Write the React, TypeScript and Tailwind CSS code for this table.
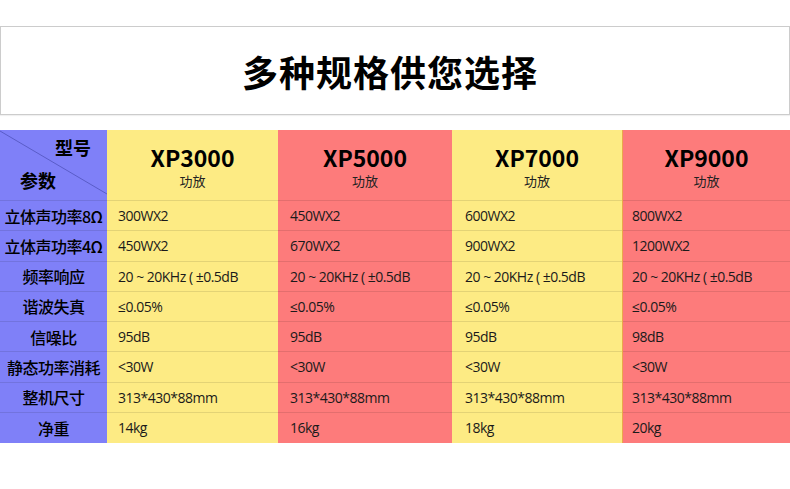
import React from "react";

type Model = {
  name: string;
  bg: string;
  pad: string;
  values: string[];
};

const labels = [
  "立体声功率8Ω",
  "立体声功率4Ω",
  "频率响应",
  "谐波失真",
  "信噪比",
  "静态功率消耗",
  "整机尺寸",
  "净重",
];

const freq = "20 ~ 20KHz ( ±0.5dB";

const models: Model[] = [
  {
    name: "XP3000",
    bg: "bg-[#fdeb84]",
    pad: "pl-[11px]",
    values: ["300WX2", "450WX2", freq, "≤0.05%", "95dB", "<30W", "313*430*88mm", "14kg"],
  },
  {
    name: "XP5000",
    bg: "bg-[#fd7b7b]",
    pad: "pl-[12px]",
    values: ["450WX2", "670WX2", freq, "≤0.05%", "95dB", "<30W", "313*430*88mm", "16kg"],
  },
  {
    name: "XP7000",
    bg: "bg-[#fdeb84]",
    pad: "pl-[13px]",
    values: ["600WX2", "900WX2", freq, "≤0.05%", "95dB", "<30W", "313*430*88mm", "18kg"],
  },
  {
    name: "XP9000",
    bg: "bg-[#fd7b7b]",
    pad: "pl-[9px]",
    values: ["800WX2", "1200WX2", freq, "≤0.05%", "98dB", "<30W", "313*430*88mm", "20kg"],
  },
];

const cjk = { fontFamily: '"Noto Sans CJK SC", "Noto Sans", sans-serif' };
const latin = { fontFamily: '"Open Sans", "Noto Sans CJK SC", sans-serif' };

function ModelColumn({ model, last }: { model: Model; last?: boolean }) {
  return (
    <div className={`flex flex-col ${model.bg} ${last ? "border-l border-[#e9a94a]" : ""}`}>
      <div className="flex h-[71px] flex-col items-center justify-center gap-[7px] border-b border-black/10 pt-[3px]">
        <span className="text-[23px] font-bold leading-[20px] text-black">{model.name}</span>
        <span className="text-[13px] leading-[13px] text-[#222]">功放</span>
      </div>
      {model.values.map((v, i) => (
        <div
          key={i}
          style={latin}
          className={`flex h-[30.25px] items-center whitespace-nowrap ${model.pad} text-[14px] tracking-[-0.5px] text-[#1a1a1a] ${
            i < model.values.length - 1 ? "border-b border-black/10" : ""
          }`}
        >
          {v}
        </div>
      ))}
    </div>
  );
}

export default function App() {
  return (
    <div className="h-[489px] w-[790px] overflow-hidden bg-white pt-[26px]" style={cjk}>
      <div className="flex h-[89px] items-center justify-center border border-[#cccccc] pr-[10px] shadow-[0_1px_1px_rgba(0,0,0,0.06)]">
        <h1 className="text-[36px] font-bold tracking-[1px] text-black">多种规格供您选择</h1>
      </div>

      <div className="mt-[15px] grid grid-cols-[107px_171px_174px_170px_168px]">
        <div className="flex flex-col bg-[#7f80f8]">
          <div className="relative h-[71px] border-b border-black/10">
            <svg className="absolute inset-0" width="107" height="71" viewBox="0 0 107 71">
              <line x1="0" y1="1" x2="107" y2="64" stroke="#5a5cc8" strokeWidth="1" />
            </svg>
            <span className="absolute left-[55px] top-[4px] text-[18px] font-bold text-black">型号</span>
            <span className="absolute left-[20px] top-[37px] text-[18px] font-bold text-black">参数</span>
          </div>
          {labels.map((l, i) => (
            <div
              key={l}
              className={`flex h-[30.25px] items-center justify-center whitespace-nowrap text-[16px] font-medium tracking-[-0.5px] text-black ${
                i < labels.length - 1 ? "border-b border-black/10" : ""
              }`}
            >
              {l}
            </div>
          ))}
        </div>
        {models.map((m, i) => (
          <ModelColumn key={m.name} model={m} last={i === 3} />
        ))}
      </div>
    </div>
  );
}
